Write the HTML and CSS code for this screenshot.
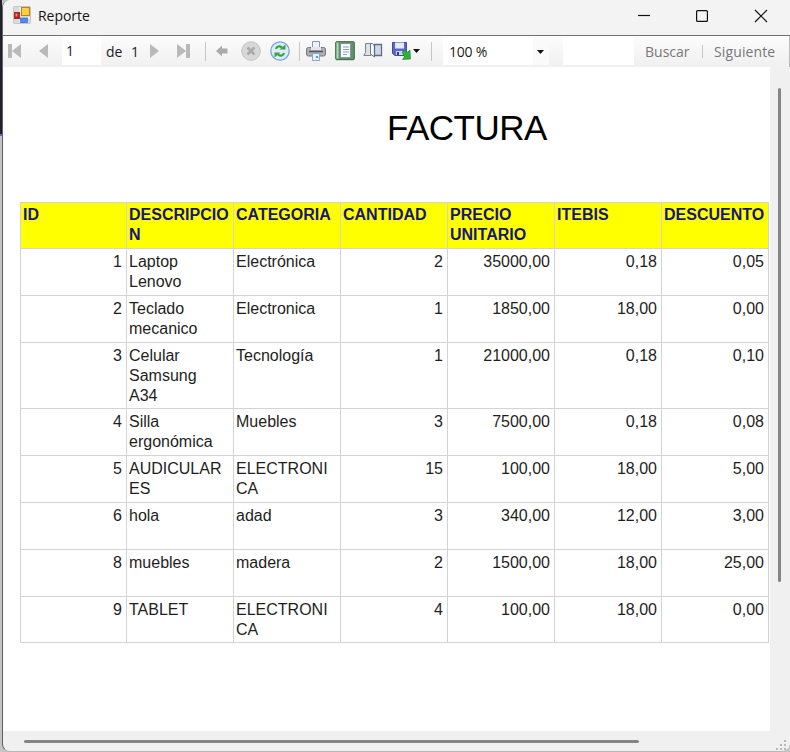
FILE: index.html
```
<!DOCTYPE html>
<html lang="es">
<head>
<meta charset="utf-8">
<title>Reporte</title>
<link rel="stylesheet" href="styles.css">
</head>
<body>
<div class="edge"><div class="edge-dark"></div></div>
<main class="window">
  <header class="titlebar">
    <svg class="app-icon" width="18" height="18" viewBox="0 0 18 18"><rect x=".5" y=".5" width="17" height="17" rx="1" fill="#d9dadd" stroke="#c3c5c9"/><path d="M7 1v16M1 12h16" stroke="#fff"/><rect x="1" y="6" width="6" height="7" fill="#b32320"/><rect x="2.5" y="7.5" width="2" height="3" fill="#e9877d"/><rect x="8.5" y="1.5" width="8" height="8" fill="#f9cf45" stroke="#b98510"/><rect x="7.5" y="12" width="7" height="4.5" fill="#4f8eea" stroke="#3465c4" stroke-width=".7"/></svg>
    <span class="caption">Reporte</span>
    <svg class="controls" width="132" height="18" viewBox="0 0 132 18" fill="none" stroke="#111" stroke-width="1.2"><path d="M0 8.5h12"/><rect x="58.6" y="3.6" width="10.8" height="10.8" rx="1"/><path d="M117 3l12 12M129 3l-12 12"/></svg>
  </header>
  <nav class="toolbar">
    <svg class="i-first" width="14" height="16"><path d="M0 1h4v14H0zM13 1v14L4 8z" fill="#b9b9b9"/></svg>
    <svg class="i-prev" width="9" height="16"><path d="M9 1v14L0 8z" fill="#b9b9b9"/></svg>
    <span class="page-box">1</span>
    <span class="t-de">de</span><span class="t-total">1</span>
    <svg class="i-next" width="9" height="16"><path d="M0 1v14l9-7z" fill="#b9b9b9"/></svg>
    <svg class="i-last" width="14" height="16"><path d="M0 1v14l9-7zM9 1h4v14H9z" fill="#b9b9b9"/></svg>
    <i class="sep s1"></i>
    <svg class="i-back" width="12" height="12"><path d="M0 6l6-5.500V3.500h5.500v5H6v3z" fill="#ababab"/></svg>
    <svg class="i-stop" width="20" height="20"><circle cx="10" cy="10" r="9.300" fill="#d8d8d8" stroke="#c2c2c2"/><path d="M6.500 6.500l7 7M13.500 6.500l-7 7" stroke="#a9a9a9" stroke-width="2.600"/></svg>
    <svg class="i-refresh" width="20" height="20"><circle cx="10" cy="10" r="9.200" fill="#dcecfb" stroke="#7da6d8" stroke-width="1.300"/><g fill="none" stroke="#35a43a" stroke-width="2.200"><path d="M6 8C6.500 5.500 9 4.500 12 6.500M14 12c-.5 2.500-3 3.500-6 1.500"/></g><path d="M9.500 8.500h6V3.500zM10.500 11.500h-6v5z" fill="#35a43a"/></svg>
    <i class="sep s2"></i>
    <svg class="i-print" width="20" height="20"><path d="M6.500.5h7v8h-7z" fill="#eef4ff" stroke="#8b96a8"/><rect x=".5" y="6.500" width="19" height="8.500" rx="2" fill="#adafb3" stroke="#73767c"/><path d="M5 6h10v3H5z" fill="#dfe5ee"/><path d="M3 10.500h14" stroke="#55575d" stroke-width="1.500"/><path d="M6.500 12.500h7v7h-7z" fill="#e3f1ff" stroke="#8aa5c7"/><path d="M10 15h2v2h-2z" fill="#4c99df"/></svg>
    <svg class="i-page" width="20" height="20"><rect x=".7" y=".7" width="18.600" height="18" rx="1" fill="#5c9864" stroke="#3e6245"/><path d="M1.500 1.500h2v16h-2z" fill="#b5dab4"/><path d="M5.500 2.500h10v14h-10z" fill="#f7fbff" stroke="#7e939c"/><path d="M8 6h6M8 8.500h6M8 11h6M8 13.500h4" stroke="#8fa3ba"/></svg>
    <svg class="i-setup" width="20" height="20"><path d="M2.500 2.500H8v12H.8l1.700-3z" fill="#dce2e9" stroke="#7c8490"/><path d="M7.500 2.500h2l2 2.500v11l-4-3z" fill="#fbfcfe" stroke="#6e7784"/><path d="M11.500 3.500h7v11h-7z" fill="#c9d8ea" stroke="#5f6c82" stroke-width="1.300"/></svg>
    <svg class="i-save" width="20" height="20"><path d="M.5 1.500h14v13H3l-2.500-2z" fill="#5a66c4" stroke="#434ba6"/><path d="M3 1.500h9v6H3z" fill="#e4eafc"/><path d="M4 10h7v4H4z" fill="#d0d4ec"/><path d="M5 11h2v3H5z" fill="#343c84"/><path d="M10 11l3-1.500 2 2 3-2.500.5 9-8 .5 2-2.500z" fill="#2fb13b" stroke="#178329" stroke-width=".6"/></svg>
    <svg class="i-caret" width="7" height="4"><path d="M0 0h7L3.500 4z" fill="#111"/></svg>
    <i class="sep s3"></i>
    <span class="zoom-box"><span class="zoom-value">100 %</span><span class="zoom-arrow"><svg width="7" height="4"><path d="M0 0h7L3.500 4z" fill="#111"/></svg></span></span>
    <span class="find-box"></span>
    <span class="t-find">Buscar</span>
    <i class="sep s4"></i>
    <span class="t-nextfind">Siguiente</span>
  </nav>
  <section class="viewer">
    <article class="report">
      <h1>FACTURA</h1>
      <table>
        <colgroup><col class="c1"><col class="c2"><col class="c2"><col class="c2"><col class="c2"><col class="c2"><col class="c2"></colgroup>
        <thead><tr class="r46"><th>ID</th><th>DESCRIPCIO<br>N</th><th>CATEGORIA</th><th>CANTIDAD</th><th>PRECIO<br>UNITARIO</th><th>ITEBIS</th><th>DESCUENTO</th></tr></thead>
        <tbody>
          <tr class="r47"><td class="n">1</td><td>Laptop<br>Lenovo</td><td>Electrónica</td><td class="n">2</td><td class="n">35000,00</td><td class="n">0,18</td><td class="n">0,05</td></tr>
          <tr class="r47"><td class="n">2</td><td>Teclado<br>mecanico</td><td>Electronica</td><td class="n">1</td><td class="n">1850,00</td><td class="n">18,00</td><td class="n">0,00</td></tr>
          <tr class="r66"><td class="n">3</td><td>Celular<br>Samsung<br>A34</td><td>Tecnología</td><td class="n">1</td><td class="n">21000,00</td><td class="n">0,18</td><td class="n">0,10</td></tr>
          <tr class="r47"><td class="n">4</td><td>Silla<br>ergonómica</td><td>Muebles</td><td class="n">3</td><td class="n">7500,00</td><td class="n">0,18</td><td class="n">0,08</td></tr>
          <tr class="r47"><td class="n">5</td><td>AUDICULAR<br>ES</td><td>ELECTRONI<br>CA</td><td class="n">15</td><td class="n">100,00</td><td class="n">18,00</td><td class="n">5,00</td></tr>
          <tr class="r47"><td class="n">6</td><td>hola</td><td>adad</td><td class="n">3</td><td class="n">340,00</td><td class="n">12,00</td><td class="n">3,00</td></tr>
          <tr class="r47"><td class="n">8</td><td>muebles</td><td>madera</td><td class="n">2</td><td class="n">1500,00</td><td class="n">18,00</td><td class="n">25,00</td></tr>
          <tr class="r46"><td class="n">9</td><td>TABLET</td><td>ELECTRONI<br>CA</td><td class="n">4</td><td class="n">100,00</td><td class="n">18,00</td><td class="n">0,00</td></tr>
        </tbody>
      </table>
    </article>
    <div class="vscroll"><div class="vthumb"></div></div>
  </section>
  <footer class="hscroll"><div class="hthumb"></div>
    <svg class="grip" width="12" height="12" fill="#b9b9b9"><path d="M8 1h2v2H8zM8 5h2v2H8zM4 5h2v2H4zM8 9h2v2H8zM4 9h2v2H4zM0 9h2v2H0z"/></svg>
  </footer>
</main>
</body>
</html>
```
FILE: styles.css
```
* { box-sizing: border-box; }
body { margin: 0; width: 790px; height: 752px; display: flex; overflow: hidden; background: #c4c4c4; font-family: "Open Sans", "Noto Sans", sans-serif; }
svg { display: block; flex: none; }
.edge { width: 2px; height: 752px; background: #c4c4c4; }
.edge-dark { height: 136px; background: #20222b; border-bottom: 2px solid #6a60dc; }
.window { width: 788px; height: 752px; border-left: 1px solid #606060; border-bottom: 1px solid #b8b8b8; border-radius: 8px 0 8px 8px; overflow: hidden; background: #f0f0f0; }
.titlebar { height: 36px; display: flex; align-items: flex-start; background: #f3f3f3; border-bottom: 1px solid #707070; padding: 6px 0 0 10px; }
.caption { margin-left: 7px; width: 54px; font-size: 14px; line-height: 19px; letter-spacing: -.05px; color: #151515; white-space: nowrap; }
.controls { margin: 1px 0 0 546px; }
.toolbar { height: 31px; display: flex; align-items: center; padding: 0 0 1px 5px; background: linear-gradient(#fcfcfc, #f0f0f0); border-right: 1px solid #bbb; font-size: 14px; color: #1c1c1c; white-space: nowrap; }
.toolbar > * { flex: none; }
.i-prev { margin-left: 17px; }
.page-box { margin-left: 14px; width: 39px; height: 28px; line-height: 28px; padding-left: 4px; background: #fff; }
.t-de { margin-left: 5px; width: 25px; }
.t-total { width: 8px; }
.i-next { margin-left: 11px; }
.i-last { margin-left: 18px; }
.sep { width: 1px; height: 19px; background: #c6c6c6; }
.s1 { margin-left: 14px; }
.i-back { margin-left: 10px; }
.i-stop { margin-left: 13px; }
.i-refresh { margin-left: 9px; }
.s2 { margin-left: 9px; }
.i-print { margin-left: 6px; }
.i-page { margin-left: 9px; }
.i-setup { margin-left: 8px; }
.i-save { margin-left: 9px; }
.i-caret { margin-left: 1px; }
.s3 { margin-left: 11px; }
.zoom-box { margin-left: 11px; width: 106px; height: 28px; display: flex; background: #fff; }
.zoom-value { width: 90px; padding-left: 6px; line-height: 30px; letter-spacing: -.2px; }
.zoom-arrow { width: 16px; background: #fafafa; padding: 13px 0 0 4px; }
.find-box { margin-left: 14px; width: 71px; height: 28px; background: #fff; }
.t-find { margin-left: 11px; width: 45px; color: #777; }
.s4 { margin-left: 12px; height: 13px; }
.t-nextfind { margin-left: 11px; letter-spacing: .12px; color: #777; }
.viewer { height: 665px; display: flex; }
.report { width: 767px; height: 664px; background: #fff; padding: 41px 0 0 17px; font-family: "Liberation Sans", Arial, sans-serif; }
h1 { margin: 0; padding-left: 367px; height: 94px; font-weight: 400; font-size: 35px; line-height: 40px; color: #000; letter-spacing: -.5px; }
table { width: 749px; table-layout: fixed; border-collapse: collapse; font-size: 16px; line-height: 20px; color: #1e1e1e; }
.c1 { width: 106px; }
.c2 { width: 107px; }
th, td { border: 1px solid #d3d3d3; padding: 3px 2px 0; vertical-align: top; text-align: left; white-space: nowrap; font-weight: 400; }
th { padding-top: 2px; background: #ff0; color: #16167a; font-weight: 700; }
td.n { text-align: right; padding-right: 4px; }
.r46 { height: 46px; }
.r47 { height: 47px; }
.r66 { height: 66px; }
.vscroll { width: 20px; padding: 21px 0 0 8px; }
.vthumb { width: 3px; height: 494px; border-radius: 2px; background: #858585; }
.hscroll { height: 19px; display: flex; justify-content: space-between; padding: 8px 2px 0 21px; }
.hthumb { width: 615px; height: 3px; border-radius: 2px; background: #858585; }
.grip { margin-top: -1px; }
```
